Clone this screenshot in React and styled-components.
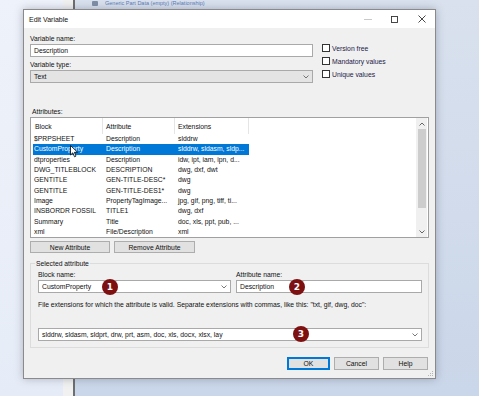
import React from "react";
import styled, { createGlobalStyle } from "styled-components";

const rows = [
  ["$PRPSHEET", "Description", "slddrw"],
  ["CustomProperty", "Description", "slddrw, sldasm, sldp..."],
  ["dtproperties", "Description", "idw, ipt, iam, ipn, d..."],
  ["DWG_TITLEBLOCK", "DESCRIPTION", "dwg, dxf, dwt"],
  ["GENTITLE", "GEN-TITLE-DESC*", "dwg"],
  ["GENTITLE", "GEN-TITLE-DES1*", "dwg"],
  ["Image", "PropertyTagImage...", "jpg, gif, png, tiff, ti..."],
  ["INSBORDR FOSSIL", "TITLE1", "dwg, dxf"],
  ["Summary", "Title", "doc, xls, ppt, pub, ..."],
  ["xml", "File/Description", "xml"],
];

const Global = createGlobalStyle`
  html, body { margin: 0; padding: 0; }
  body {
    font-family: "Liberation Sans", Arial, sans-serif;
    font-size: 6.8px;
    color: #111;
    background: #cfd9ea;
  }
`;

const Desktop = styled.div`
  position: relative;
  width: 479px;
  height: 396px;
  overflow: hidden;
  display: flex;
`;

const LeftPane = styled.div`
  width: 63px;
  background: linear-gradient(180deg, #eef2fa 0%, #e6ecf7 100%);
`;

const Strip = styled.div`
  width: 10px;
  background: #f1f1f1;
  border-right: 2px solid #6e6e6e;
`;

const BackArea = styled.div`
  flex: 1;
  background: linear-gradient(180deg, #d9e1ee 0%, #cad6e9 100%);
  padding-left: 17px;
`;

const BackRow = styled.div`
  display: flex;
  align-items: center;
  gap: 7px;
  height: 6px;
  margin-top: ${(p) => p.$top}px;
  color: #5a7bb6;
  font-size: 5.5px;
  white-space: nowrap;
`;

const BackIcon = styled.div`
  width: 6px;
  height: 5px;
  background: #7f8ea6;
  border-radius: 1px;
`;

const Window = styled.div`
  position: absolute;
  left: 23px;
  top: 9px;
  width: 411px;
  height: 368px;
  border: 1px solid #8a8a8a;
  background: #f0f0f0;
  box-shadow: 0 0 8px rgba(60, 70, 90, 0.35);
  display: flex;
  flex-direction: column;
`;

const TitleBar = styled.div`
  height: 18px;
  background: #fff;
  display: flex;
  align-items: center;
  padding-left: 5px;
  font-size: 7px;
`;

const TitleText = styled.div`
  flex: 1;
`;

const TitleButton = styled.div`
  width: 27px;
  height: 18px;
  display: flex;
  align-items: center;
  justify-content: center;
`;

const Body = styled.div`
  flex: 1;
  position: relative;
  padding: 6px 6px 0 6px;
  display: flex;
  flex-direction: column;
`;

const TopSection = styled.div`
  display: flex;
  gap: 9px;
`;

const TopFields = styled.div`
  width: 283px;
  display: flex;
  flex-direction: column;
`;

const Label = styled.div`
  height: 9px;
  line-height: 9px;
  margin-bottom: 1px;
  white-space: nowrap;
`;

const Input = styled.div`
  box-sizing: border-box;
  height: 13px;
  border: 1px solid #a9a9a9;
  background: ${(p) => (p.$disabled ? "#e4e4e4" : "#fff")};
  display: flex;
  align-items: center;
  padding-left: 3px;
  margin-top: ${(p) => p.$mt || 0}px;
  margin-bottom: ${(p) => p.$mb || 0}px;
  white-space: nowrap;
  width: ${(p) => (p.$w ? p.$w + "px" : "auto")};
`;

const Chevron = styled.span`
  margin-left: auto;
  margin-right: 3px;
  display: flex;
`;

const Checks = styled.div`
  padding-top: 10px;
  display: flex;
  flex-direction: column;
  gap: 5px;
`;

const CheckRow = styled.div`
  display: flex;
  align-items: center;
  gap: 2px;
  height: 8px;
  color: #1d2148;
`;

const Box = styled.div`
  box-sizing: border-box;
  width: 8px;
  height: 8px;
  border: 1px solid #333;
  background: #fff;
`;

const AttrLabel = styled(Label)`
  margin-top: 24px;
  padding-left: 2px;
`;

const ListBox = styled.div`
  box-sizing: border-box;
  width: 399px;
  height: 121px;
  border: 1px solid #a0a0a0;
  background: #fff;
  display: flex;
`;

const ListMain = styled.div`
  flex: 1;
  display: flex;
  flex-direction: column;
`;

const HeaderRow = styled.div`
  display: flex;
  height: 16px;
`;

const HeaderCell = styled.div`
  width: ${(p) => p.$w}px;
  box-sizing: border-box;
  border-right: 1px solid #e5e5e5;
  padding-left: ${(p) => p.$pl || 3}px;
  display: flex;
  align-items: center;
  padding-top: 1px;
`;

const Row = styled.div`
  display: flex;
  height: 10.35px;
  align-items: center;
  width: 216px;
  margin-left: 2px;
  background: ${(p) => (p.$sel ? "#0078d7" : "transparent")};
  color: ${(p) => (p.$sel ? "#fff" : "#111")};
`;

const Cell = styled.div`
  width: ${(p) => p.$w}px;
  box-sizing: border-box;
  padding-left: ${(p) => p.$pl || 3}px;
  white-space: nowrap;
  line-height: 10px;
`;

const ScrollBar = styled.div`
  width: 11px;
  background: #f0f0f0;
  display: flex;
  flex-direction: column;
  align-items: center;
  margin: 0 1px 0 0;
`;

const ScrollArrow = styled.div`
  height: 11px;
  display: flex;
  align-items: center;
  justify-content: center;
`;

const Thumb = styled.div`
  width: 8px;
  height: 79px;
  background: #cdcdcd;
`;

const ButtonRow = styled.div`
  display: flex;
  gap: 4px;
  margin-top: ${(p) => p.$mt || 3}px;
  justify-content: ${(p) => (p.$end ? "flex-end" : "flex-start")};
  padding-right: ${(p) => (p.$end ? 1 : 0)}px;
`;

const Button = styled.div`
  box-sizing: border-box;
  width: ${(p) => p.$w}px;
  height: ${(p) => p.$h || 12}px;
  background: #e1e1e1;
  border: 1px solid ${(p) => (p.$def ? "#0078d7" : "#adadad")};
  box-shadow: ${(p) => (p.$def ? "inset 0 0 0 1px #0078d7" : "none")};
  display: flex;
  align-items: center;
  justify-content: center;
`;

const Group = styled.fieldset`
  box-sizing: border-box;
  width: 399px;
  height: 88px;
  margin: 7px 0 0 0;
  padding: 3px 6px 0 7px;
  border: 1px solid #dcdcdc;
  min-width: 0;
  position: relative;
`;

const Legend = styled.legend`
  padding: 0 1px;
  margin-left: -3px;
  font-size: 6.8px;
`;

const FieldRow = styled.div`
  display: flex;
  gap: 5px;
`;

const FieldCol = styled.div`
  display: flex;
  flex-direction: column;
  width: ${(p) => p.$w}px;
`;

const Hint = styled.div`
  margin-top: 7px;
  height: 9px;
  line-height: 9px;
  white-space: nowrap;
`;

const Badge = styled.div`
  position: absolute;
  left: ${(p) => p.$x - 8}px;
  top: ${(p) => p.$y - 8}px;
  width: 16px;
  height: 16px;
  border-radius: 50%;
  background: #7d1112;
  color: #fff;
  font-family: "DejaVu Sans", sans-serif;
  font-weight: bold;
  font-size: 9px;
  display: flex;
  align-items: center;
  justify-content: center;
`;

const Cursor = styled.svg`
  position: absolute;
  left: 46px;
  top: 117px;
`;

const Grip = styled.svg`
  position: absolute;
  right: 1px;
  bottom: 1px;
`;

const ChevronSvg = () => (
  <svg width="6" height="4" viewBox="0 0 6 4">
    <path d="M0.5 0.5 L3 3 L5.5 0.5" fill="none" stroke="#555" strokeWidth="0.8" />
  </svg>
);

export default function App() {
  return (
    <>
      <Global />
      <Desktop>
        <LeftPane />
        <Strip />
        <BackArea>
          <BackRow $top={0}>
            <BackIcon />
            <span>Generic Part Data (empty) (Relationship)</span>
          </BackRow>
          <BackRow $top={2}>
            <BackIcon />
            <span style={{ color: "#8c99b0" }}>xxxxxxxxxxxxxxxxxxxx</span>
          </BackRow>
        </BackArea>

        <Window>
          <TitleBar>
            <TitleText>Edit Variable</TitleText>
            <TitleButton>
              <svg width="8" height="8" viewBox="0 0 8 8">
                <path d="M0 4.5 H8" stroke="#bbb" strokeWidth="0.8" />
              </svg>
            </TitleButton>
            <TitleButton>
              <svg width="7" height="7" viewBox="0 0 7 7">
                <rect x="0.5" y="0.5" width="6" height="6" fill="none" stroke="#333" strokeWidth="0.9" />
              </svg>
            </TitleButton>
            <TitleButton>
              <svg width="8" height="8" viewBox="0 0 8 8">
                <path d="M0.5 0.5 L7.5 7.5 M7.5 0.5 L0.5 7.5" stroke="#333" strokeWidth="0.9" />
              </svg>
            </TitleButton>
          </TitleBar>

          <Body>
            <TopSection>
              <TopFields>
                <Label>Variable name:</Label>
                <Input $mb={3}>Description</Input>
                <Label>Variable type:</Label>
                <Input $disabled>
                  Text
                  <Chevron>
                    <ChevronSvg />
                  </Chevron>
                </Input>
              </TopFields>
              <Checks>
                <CheckRow>
                  <Box />
                  Version free
                </CheckRow>
                <CheckRow>
                  <Box />
                  Mandatory values
                </CheckRow>
                <CheckRow>
                  <Box />
                  Unique values
                </CheckRow>
              </Checks>
            </TopSection>

            <AttrLabel>Attributes:</AttrLabel>
            <ListBox>
              <ListMain>
                <HeaderRow>
                  <HeaderCell $w={72} $pl={4}>Block</HeaderCell>
                  <HeaderCell $w={72}>Attribute</HeaderCell>
                  <HeaderCell $w={74}>Extensions</HeaderCell>
                </HeaderRow>
                {rows.map((r, i) => (
                  <Row key={i} $sel={i === 1}>
                    <Cell $w={70} $pl={1}>{r[0]}</Cell>
                    <Cell $w={72}>{r[1]}</Cell>
                    <Cell $w={74}>{r[2]}</Cell>
                  </Row>
                ))}
              </ListMain>
              <ScrollBar>
                <ScrollArrow>
                  <svg width="6" height="4" viewBox="0 0 6 4">
                    <path d="M0.5 3.5 L3 1 L5.5 3.5" fill="none" stroke="#555" strokeWidth="0.9" />
                  </svg>
                </ScrollArrow>
                <Thumb />
                <div style={{ flex: 1 }} />
                <ScrollArrow>
                  <svg width="6" height="4" viewBox="0 0 6 4">
                    <path d="M0.5 0.5 L3 3 L5.5 0.5" fill="none" stroke="#555" strokeWidth="0.9" />
                  </svg>
                </ScrollArrow>
              </ScrollBar>
            </ListBox>

            <ButtonRow>
              <Button $w={80}>New Attribute</Button>
              <Button $w={81}>Remove Attribute</Button>
            </ButtonRow>

            <Group>
              <Legend>Selected attribute</Legend>
              <FieldRow>
                <FieldCol $w={193}>
                  <Label>Block name:</Label>
                  <Input>
                    CustomProperty
                    <Chevron>
                      <ChevronSvg />
                    </Chevron>
                  </Input>
                </FieldCol>
                <FieldCol $w={186}>
                  <Label>Attribute name:</Label>
                  <Input>Description</Input>
                </FieldCol>
              </FieldRow>
              <Hint>
                File extensions for which the attribute is valid. Separate extensions with commas, like this: "txt, gif, dwg, doc":
              </Hint>
              <Input $w={384} $mt={19}>
                slddrw, sldasm, sldprt, drw, prt, asm, doc, xls, docx, xlsx, lay
                <Chevron>
                  <ChevronSvg />
                </Chevron>
              </Input>
            </Group>

            <ButtonRow $end $mt={9}>
              <Button $w={43} $h={13} $def>OK</Button>
              <Button $w={45} $h={13}>Cancel</Button>
              <Button $w={45} $h={13}>Help</Button>
            </ButtonRow>

            <Badge $x={86} $y={259}>1</Badge>
            <Badge $x={273} $y={259}>2</Badge>
            <Badge $x={277} $y={306}>3</Badge>

            <Cursor width="9" height="13" viewBox="0 0 9 13">
              <path d="M0.5 0.5 L0.5 10 L2.8 7.8 L4.5 11.8 L6 11.1 L4.4 7.3 L7.6 7.3 Z" fill="#fff" stroke="#000" strokeWidth="0.8" />
            </Cursor>
          </Body>
          <Grip width="6" height="6" viewBox="0 0 6 6">
            <g fill="#b5b5b5">
              <rect x="4" y="0" width="1" height="1" />
              <rect x="2" y="2" width="1" height="1" />
              <rect x="4" y="2" width="1" height="1" />
              <rect x="0" y="4" width="1" height="1" />
              <rect x="2" y="4" width="1" height="1" />
              <rect x="4" y="4" width="1" height="1" />
            </g>
          </Grip>
        </Window>
      </Desktop>
    </>
  );
}
